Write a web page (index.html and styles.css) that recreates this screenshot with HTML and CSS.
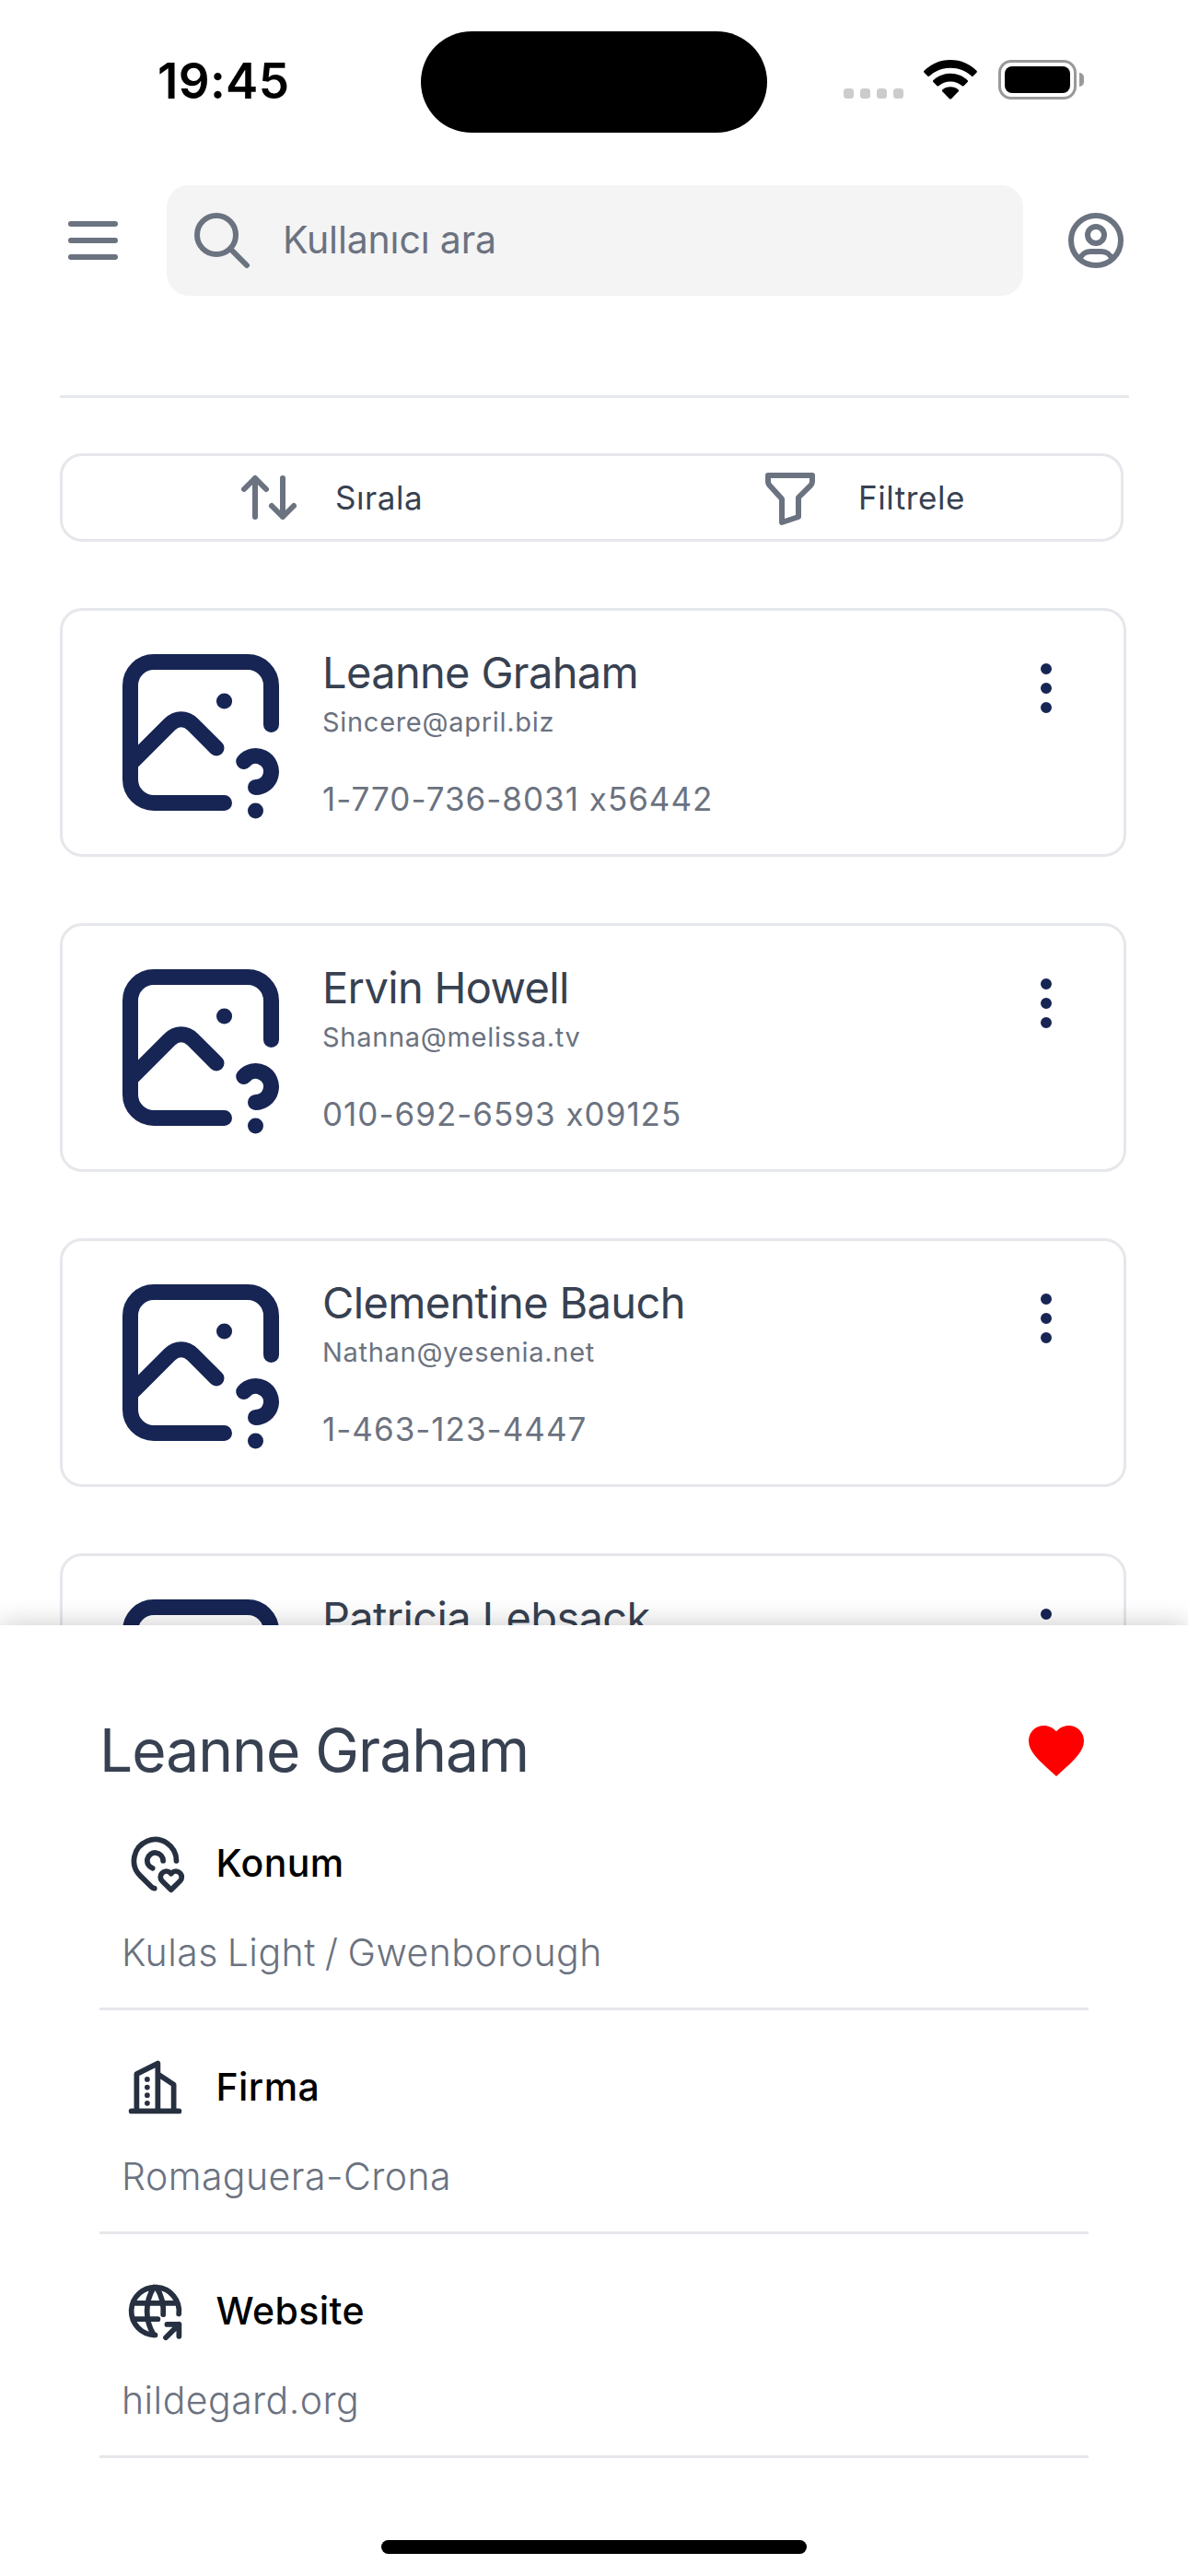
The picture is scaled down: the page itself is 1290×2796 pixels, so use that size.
FILE: index.html
```html
<!DOCTYPE html>
<html lang="tr">
<head>
<meta charset="utf-8">
<title>Kullanıcılar</title>
<link rel="stylesheet" href="styles.css">
</head>
<body>
<svg class="sprite" aria-hidden="true">
  <symbol id="photo-question" viewBox="0 0 24 24">
    <path d="M15 8h.01M15 21h-9a3 3 0 0 1 -3 -3v-12a3 3 0 0 1 3 -3h12a3 3 0 0 1 3 3v5"/>
    <path d="M3 16l5 -5c.928 -.893 2.072 -.893 3 0l3 3M19 22v.01M19 19a2.003 2.003 0 0 0 .914 -3.782a1.98 1.98 0 0 0 -2.414 .483"/>
  </symbol>
  <symbol id="dots-vertical" viewBox="0 0 24 24">
    <path d="M11 12a1 1 0 1 0 2 0a1 1 0 1 0 -2 0M11 19a1 1 0 1 0 2 0a1 1 0 1 0 -2 0M11 5a1 1 0 1 0 2 0a1 1 0 1 0 -2 0"/>
  </symbol>
</svg>
<div class="app">
  <div class="status">
    <div class="time">19:45</div>
    <div class="island"></div>
    <div class="indicators">
      <div class="signal"><i></i><i></i><i></i><i></i></div>
      <svg class="wifi" viewBox="0 0 58 43">
        <path d="M29 0C40.500 0 50.500 4.600 57.500 11.800Q58.300 12.800 57.500 13.700L53.500 17.700Q52.700 18.500 51.800 17.600C45.800 12 37.900 8.800 29 8.800S12.200 12 6.200 17.600Q5.300 18.500 4.500 17.700L.5 13.700Q-.3 12.800 .5 11.800C7.500 4.600 17.500 0 29 0Z"/>
        <path d="M29 14.700C36.500 14.700 43 17.600 47.700 22.200Q48.500 23.100 47.700 24L43.500 28.200Q42.600 29 41.700 28.200C38.300 25.100 33.900 23.400 29 23.400S19.700 25.100 16.300 28.200Q15.400 29 14.500 28.200L10.300 24Q9.500 23.100 10.300 22.200C15 17.600 21.500 14.700 29 14.700Z"/>
        <path d="M29 29.300C32.400 29.300 35.500 30.500 37.700 32.500Q38.500 33.400 37.700 34.300L30 42.200Q29 43 28 42.200L20.300 34.300Q19.500 33.400 20.300 32.500C22.500 30.500 25.600 29.300 29 29.300Z"/>
      </svg>
      <div class="battery"><div class="battery-case"><div class="battery-fill"></div></div><div class="battery-tip"></div></div>
    </div>
  </div>

  <header class="topbar">
    <svg class="icon" viewBox="0 0 24 24"><path d="M4 6h16M4 12h16M4 18h16"/></svg>
    <div class="search">
      <svg class="icon" viewBox="0 0 24 24"><path d="M3 10a7 7 0 1 0 14 0a7 7 0 1 0 -14 0M21 21l-6 -6"/></svg>
      <span>Kullanıcı ara</span>
    </div>
    <svg class="icon" viewBox="0 0 24 24"><path d="M3 12a9 9 0 1 0 18 0a9 9 0 1 0 -18 0M9 10a3 3 0 1 0 6 0a3 3 0 1 0 -6 0M6.168 18.849a4 4 0 0 1 3.832 -2.849h4a4 4 0 0 1 3.834 2.855"/></svg>
  </header>

  <main>
    <div class="rule"></div>
    <div class="tools">
      <div class="tool sort">
        <svg class="icon" viewBox="0 0 24 24"><path d="M3 9l4 -4l4 4M7 5v14M21 15l-4 4l-4 -4M17 19v-14"/></svg>
        <span>Sırala</span>
      </div>
      <div class="tool filter">
        <svg class="icon" viewBox="0 0 24 24"><path d="M4 4h16v2.172a2 2 0 0 1 -.586 1.414l-4.414 4.414v7l-6 2v-8.500l-4.480 -4.928a2 2 0 0 1 -.52 -1.345v-2.227z"/></svg>
        <span>Filtrele</span>
      </div>
    </div>

    <div class="cards">
      <article class="card">
        <svg class="photo"><use href="#photo-question"/></svg>
        <div class="info"><h2>Leanne Graham</h2><p class="email">Sincere@april.biz</p><p class="phone">1-770-736-8031 x56442</p></div>
        <svg class="more"><use href="#dots-vertical"/></svg>
      </article>
      <article class="card">
        <svg class="photo"><use href="#photo-question"/></svg>
        <div class="info"><h2>Ervin Howell</h2><p class="email">Shanna@melissa.tv</p><p class="phone">010-692-6593 x09125</p></div>
        <svg class="more"><use href="#dots-vertical"/></svg>
      </article>
      <article class="card">
        <svg class="photo"><use href="#photo-question"/></svg>
        <div class="info"><h2>Clementine Bauch</h2><p class="email">Nathan@yesenia.net</p><p class="phone">1-463-123-4447</p></div>
        <svg class="more"><use href="#dots-vertical"/></svg>
      </article>
      <article class="card">
        <svg class="photo"><use href="#photo-question"/></svg>
        <div class="info"><h2>Patricia Lebsack</h2></div>
        <svg class="more"><use href="#dots-vertical"/></svg>
      </article>
    </div>
  </main>

  <section class="sheet">
    <div class="sheet-head">
      <h1>Leanne Graham</h1>
      <svg class="heart" viewBox="0 0 24 24"><path d="M12 21.350l-1.450-1.320C5.400 15.360 2 12.280 2 8.500 2 5.420 4.420 3 7.500 3c1.740 0 3.410.81 4.500 2.090C13.090 3.810 14.760 3 16.500 3 19.580 3 22 5.420 22 8.500c0 3.780-3.400 6.860-8.550 11.540L12 21.350z"/></svg>
    </div>
    <div class="detail">
      <div class="detail-head">
        <svg class="detail-icon" viewBox="0 0 24 24"><path d="M15 11a3 3 0 1 0 -3.973 2.839M11.760 21.470a1.991 1.991 0 0 1 -1.173 -.57l-4.244 -4.243a8 8 0 1 1 13.657 -5.588M18 22l3.350 -3.284a2.143 2.143 0 0 0 .005 -3.071a2.242 2.242 0 0 0 -3.129 -.006l-.224 .22l-.223 -.22a2.242 2.242 0 0 0 -3.128 -.006a2.143 2.143 0 0 0 -.006 3.071l3.355 3.296z"/></svg>
        <h3>Konum</h3>
      </div>
      <p class="spaced">Kulas Light / Gwenborough</p>
    </div>
    <div class="detail">
      <div class="detail-head">
        <svg class="detail-icon" viewBox="0 0 24 24"><path d="M3 21h18M5 21v-14l8 -4v18M19 21v-10l-6 -4M9 9v.01M9 12v.01M9 15v.01M9 18v.01"/></svg>
        <h3>Firma</h3>
      </div>
      <p>Romaguera-Crona</p>
    </div>
    <div class="detail">
      <div class="detail-head">
        <svg class="detail-icon" viewBox="0 0 24 24"><path d="M20.940 13.045a9 9 0 1 0 -8.953 7.955M3.600 9h16.800M3.600 15h9.400M11.500 3a17 17 0 0 0 0 18M12.500 3a16.991 16.991 0 0 1 2.529 10.294M16 22l5 -5M21 21.500v-4.500h-4.500"/></svg>
        <h3>Website</h3>
      </div>
      <p>hildegard.org</p>
    </div>
    <div class="home-bar"></div>
  </section>
</div>
</body>
</html>
```
FILE: styles.css
```css
* { box-sizing: border-box; }

body {
  margin: 0;
  background: #fff;
  font-family: Inter, "Liberation Sans", sans-serif;
}

h1, h2, h3, p { margin: 0; font-weight: 400; }
svg { display: block; flex: none; }

.sprite { position: absolute; width: 0; height: 0; }

.app {
  position: relative;
  width: 1290px;
  height: 2796px;
  overflow: hidden;
}

/* Status bar */
.status {
  display: grid;
  grid-template-columns: 457px 376px 1fr;
  padding-top: 34px;
  height: 201px;
  align-items: start;
}
.time {
  padding: 23px 0 0 171px;
  font-size: 53px;
  line-height: 62px;
  font-weight: 600;
  letter-spacing: .3px;
}
.island { height: 110px; border-radius: 55px; background: #000; }
.indicators {
  display: flex;
  align-items: flex-end;
  padding: 31px 0 0 83px;
}
.signal { display: flex; gap: 7px; margin-bottom: 1px; }
.signal i { width: 11px; height: 11px; border-radius: 3.500px; background: #ccc; }
.wifi { width: 58px; height: 43px; margin-left: 22px; }
.battery { display: flex; align-items: center; gap: 3px; margin-left: 23px; }
.battery-case {
  width: 85px;
  height: 43px;
  padding: 4px;
  border: 3px solid #999;
  border-radius: 14px;
}
.battery-fill { height: 29px; border-radius: 8px; background: #000; }
.battery-tip { width: 5px; height: 15px; border-radius: 0 5px 5px 0; background: #999; }

/* Top bar */
.icon {
  width: 72px;
  height: 72px;
  fill: none;
  stroke: #6b7280;
  stroke-width: 2;
  stroke-linecap: round;
  stroke-linejoin: round;
}
.topbar {
  display: flex;
  align-items: center;
  padding: 0 64px 0 65px;
}
.search {
  display: flex;
  align-items: center;
  flex: 1;
  height: 120px;
  margin: 0 43px 0 44px;
  padding-left: 24px;
  gap: 30px;
  border-radius: 24px;
  background: #f4f4f4;
  color: #6b7280;
  font-size: 41px;
  letter-spacing: -.15px;
}
.search span { padding-bottom: 2px; }

main { padding: 108px 64px 0 65px; }
.rule { height: 3px; background: #e5e7eb; }

.tools {
  display: grid;
  grid-template-columns: 1fr 1fr;
  width: 1155px;
  height: 96px;
  margin: 60px 0 72px;
  border: 3px solid #e5e7eb;
  border-radius: 24px;
}
.tool {
  display: flex;
  align-items: center;
  gap: 36px;
  color: #374151;
  font-size: 35px;
  letter-spacing: .55px;
}
.sort { padding-left: 188px; }
.filter { padding-left: 179.500px; gap: 38px; }

/* User cards */
.cards { display: flex; flex-direction: column; gap: 72px; width: 1158px; }
.card {
  display: flex;
  align-items: flex-start;
  height: 270px;
  padding: 30px 48px 0;
  border: 3px solid #e5e7eb;
  border-radius: 24px;
}
.photo, .more {
  fill: none;
  stroke: #172554;
  stroke-width: 2;
  stroke-linecap: round;
  stroke-linejoin: round;
}
.photo { width: 204px; height: 204px; }
.more { width: 72px; height: 72px; margin-top: 18px; }
.info { flex: 1; padding: 9px 0 0 30px; }
.info h2 { font-size: 47px; line-height: 56px; letter-spacing: -.65px; color: #374151; }
.email { margin-top: 4px; font-size: 29px; line-height: 44px; letter-spacing: .7px; color: #6b7280; }
.phone { margin-top: 35px; font-size: 35px; line-height: 52px; letter-spacing: 1px; color: #6b7280; }

/* Detail sheet, laid over the list */
.sheet {
  position: absolute;
  left: 0;
  right: 0;
  bottom: 0;
  height: 1032px;
  padding: 100px 108px 0;
  background: #fff;
  box-shadow: 0 0 28px rgba(0, 0, 0, .22);
}
.sheet-head {
  display: flex;
  align-items: center;
  justify-content: space-between;
  height: 72px;
  margin: 0 -1px 3px 0;
}
.sheet-head h1 { font-size: 64px; line-height: 72px; letter-spacing: -.96px; color: #374151; }
.heart { width: 72px; height: 72px; fill: #f00; }

.detail { height: 243px; padding-top: 49px; border-bottom: 3px solid #e5e7eb; }
.detail-head { display: flex; align-items: center; gap: 32px; height: 69px; padding-left: 25.500px; }
.detail-icon {
  width: 69px;
  height: 69px;
  fill: none;
  stroke: #263040;
  stroke-width: 2;
  stroke-linecap: round;
  stroke-linejoin: round;
}
.detail h3 { padding-bottom: 2px; font-size: 41px; line-height: 50px; font-weight: 500; letter-spacing: .42px; color: #000; }
.detail p {
  margin-top: 35px;
  padding-left: 24px;
  font-size: 41px;
  line-height: 54px;
  font-weight: 300;
  letter-spacing: .45px;
  color: #6b7280;
}
.detail .spaced { word-spacing: -2px; }

.home-bar { width: 462px; height: 15px; margin: 89px auto 0; border-radius: 7.500px; background: #000; }
```
